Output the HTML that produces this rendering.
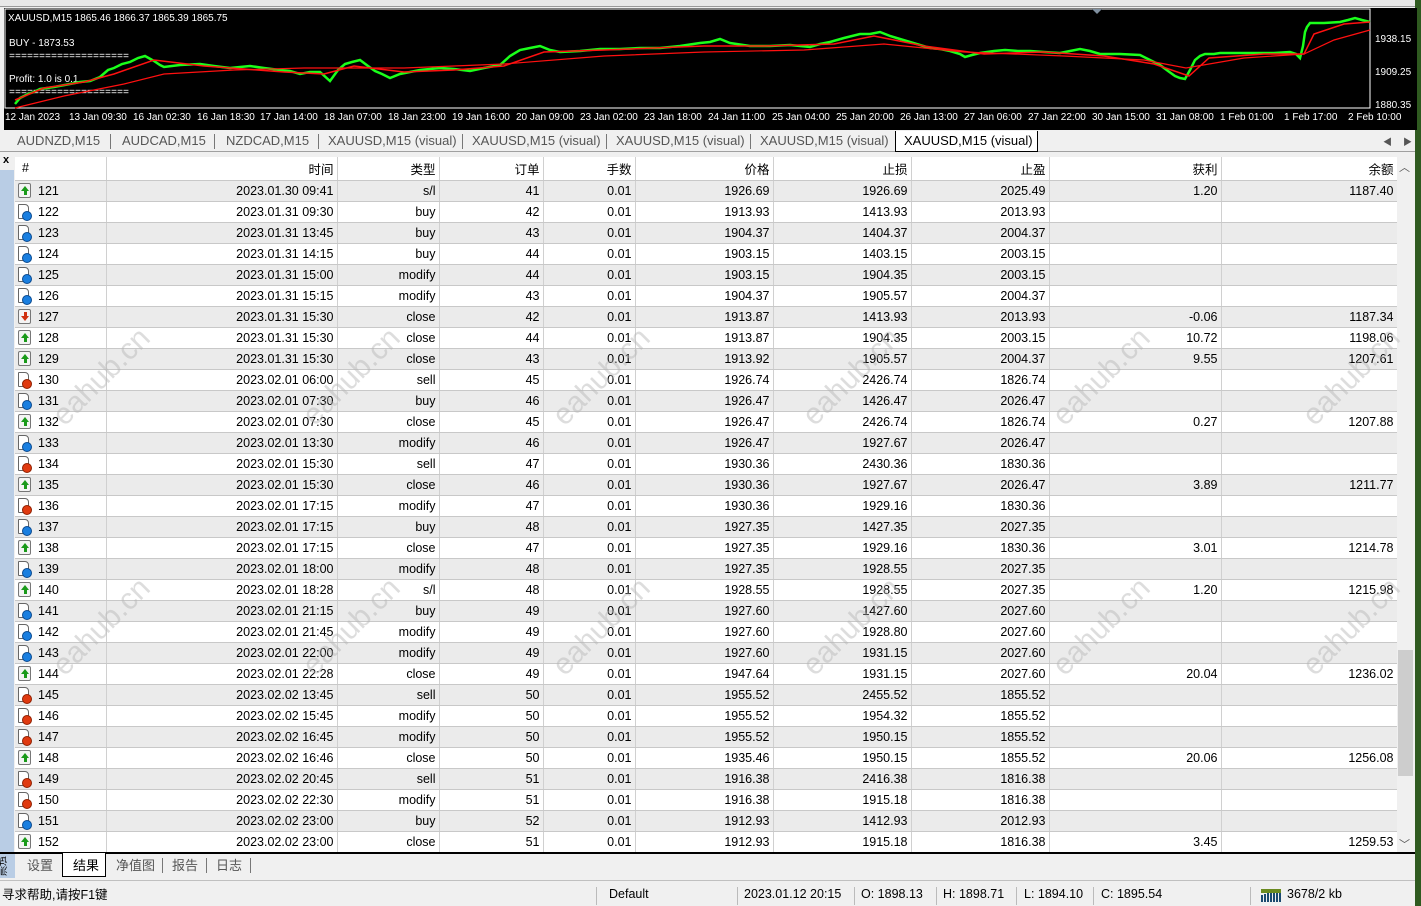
<!DOCTYPE html><html><head><meta charset="utf-8"><style>
*{margin:0;padding:0;box-sizing:border-box}
body{width:1421px;height:906px;background:#f0f0f0;font-family:"Liberation Sans","Noto Sans CJK SC",sans-serif;font-size:12.5px;color:#000;position:relative;overflow:hidden}
.abs{position:absolute}
#chart{left:4px;top:8px;width:1413px;height:122px;background:#000}
#tabs{left:0;top:131px;width:1415px;height:21px;background:#f0f0f0;border-bottom:1px solid #a0a0a0}
.tab{position:absolute;top:2px;color:#555;font-size:13px}
.sep{position:absolute;top:3px;width:1px;height:15px;background:#777}
#tbl{left:15px;top:157px;border-collapse:collapse;table-layout:fixed;background:#fff}
#tbl td{height:21px;border-right:1px solid #d0d0d0;border-bottom:1px solid #c8c8c8;text-align:right;padding:0 3px 0 0;white-space:nowrap;overflow:hidden;font-size:12.5px}
#tbl tr.h td{height:23px;border-bottom:1px solid #c8c8c8;background:#fff}
#tbl tr.g td{background:#ebebeb}
#tbl td.n{text-align:left;padding-left:3px}
.ic{display:inline-block;width:13px;height:15px;vertical-align:-3px;margin-right:7px;position:relative}
.up,.dn{border:1px solid #777;background:#f4f4f4;border-radius:2px}
.up:after{content:"";position:absolute;left:2px;top:2px;width:0;height:0;border-left:4px solid transparent;border-right:4px solid transparent;border-bottom:5px solid #1a9a1a}
.up:before{content:"";position:absolute;left:4.5px;top:6px;width:3px;height:5px;background:#1a9a1a}
.dn:after{content:"";position:absolute;left:2px;top:6px;border-left:4px solid transparent;border-right:4px solid transparent;border-top:5px solid #d03010}
.dn:before{content:"";position:absolute;left:4.5px;top:2px;width:3px;height:5px;background:#d03010}
.doc{border:1px solid #666;border-radius:1px 4px 1px 1px;background:#fff;width:11px;margin-right:9px}
.doc:after{content:"";position:absolute;right:-4px;bottom:-3px;width:8px;height:8px;border-radius:50%;background:#1a7fe0;border:1px solid #0a4a90}
.doc.r:after{background:#e03a10;border-color:#902000}
#left{left:0;top:170px;width:14px;height:682px;background:#b9cde5}
#vs{left:1397px;top:156px;width:18px;height:696px;background:#f0f0f0}
.wm{position:absolute;color:rgba(180,180,180,.45);font-size:30px;transform:rotate(-45deg);font-family:"Liberation Sans",sans-serif;white-space:nowrap}
</style></head><body>
<div class="abs" style="left:1415px;top:0;width:6px;height:906px;background:#2f5a20"></div>
<div class="abs" style="left:0;top:0;width:1415px;height:7px;background:#e8e8e8;border-bottom:1px solid #999"></div>
<div id="chart" class="abs">
<svg width="1413" height="122" style="position:absolute;left:0;top:0">
<rect x="1" y="1" width="1365" height="99" fill="none" stroke="#fff" stroke-width="1"/>
<polygon points="1088,1 1098,1 1093,6" fill="#8090a0"/>
<text x="4" y="13" fill="#fff" font-size="10" font-family="Liberation Sans">XAUUSD,M15  1865.46 1866.37 1865.39 1865.75</text>
<text x="5" y="38" fill="#fff" font-size="10" font-family="Liberation Sans">BUY - 1873.53</text>
<text x="5" y="51" fill="#fff" font-size="10" font-family="Liberation Mono">====================</text>
<text x="5" y="74" fill="#fff" font-size="10" font-family="Liberation Sans">Profit: 1.0 is 0.1</text>
<text x="5" y="87" fill="#fff" font-size="10" font-family="Liberation Mono">====================</text>
<polyline fill="none" stroke="#1aff1a" stroke-width="2.5" points="11,96 16,90 24,86 30,84 36,81 50,79 66,76 76,74 86,73 96,69 104,62 110,60 118,56 126,54 134,50 141,48 150,53 156,57 160,59 176,57 196,56 210,58 226,60 246,58 260,60 276,62 286,63 296,66 306,64 316,64 326,73 334,62 341,56 348,54 356,52 364,58 371,63 378,66 386,70 396,66 406,64 416,62 426,61 436,60 450,61 466,63 480,60 496,57 506,48 516,42 526,40 536,38 546,42 556,44 576,43 596,41 616,41 636,40 656,40 676,38 696,35 706,34 716,31 726,35 746,38 766,38 786,37 806,39 816,36 826,34 840,30 856,26 866,26 876,24 886,28 896,31 906,34 916,37 926,40 936,41 946,43 956,46 961,49 968,47 976,45 990,43 1001,42 1014,43 1026,43 1040,44 1056,45 1066,43 1076,41 1086,43 1096,46 1116,46 1136,47 1146,52 1156,57 1164,63 1171,68 1176,70 1181,71 1186,62 1191,52 1196,48 1201,46 1210,46 1216,45 1236,45 1256,45 1270,45 1286,44 1292,46 1296,50 1299,38 1301,24 1303,19 1306,15 1320,15 1336,14 1344,12 1351,10 1358,12 1366,14"/>
<polyline fill="none" stroke="#ff1010" stroke-width="1.5" points="11,92 40,80 80,74 110,66 150,52 200,58 280,64 320,66 350,58 400,64 450,62 500,58 540,44 600,42 700,38 760,38 830,36 870,28 920,38 980,46 1040,44 1100,48 1150,56 1185,68 1205,50 1260,46 1300,46 1310,26 1340,16 1366,14"/>
<polyline fill="none" stroke="#ff1010" stroke-width="1.2" points="11,100 60,88 120,76 160,66 230,62 300,60 400,60 500,56 600,48 700,44 800,42 880,36 960,44 1060,48 1140,52 1182,60 1240,50 1300,46 1330,32 1366,22"/>
<g fill="#fff" font-size="10" font-family="Liberation Sans">
<text x="1371" y="34">1938.15</text><text x="1371" y="67">1909.25</text><text x="1371" y="100">1880.35</text>
<text x="1" y="112">12 Jan 2023</text><text x="65" y="112">13 Jan 09:30</text><text x="129" y="112">16 Jan 02:30</text><text x="193" y="112">16 Jan 18:30</text><text x="256" y="112">17 Jan 14:00</text><text x="320" y="112">18 Jan 07:00</text><text x="384" y="112">18 Jan 23:00</text><text x="448" y="112">19 Jan 16:00</text><text x="512" y="112">20 Jan 09:00</text><text x="576" y="112">23 Jan 02:00</text><text x="640" y="112">23 Jan 18:00</text><text x="704" y="112">24 Jan 11:00</text><text x="768" y="112">25 Jan 04:00</text><text x="832" y="112">25 Jan 20:00</text><text x="896" y="112">26 Jan 13:00</text><text x="960" y="112">27 Jan 06:00</text><text x="1024" y="112">27 Jan 22:00</text><text x="1088" y="112">30 Jan 15:00</text><text x="1152" y="112">31 Jan 08:00</text><text x="1216" y="112">1 Feb 01:00</text><text x="1280" y="112">1 Feb 17:00</text><text x="1344" y="112">2 Feb 10:00</text>
</g>
</svg></div>
<div id="tabs" class="abs">
<span class="tab" style="left:17px">AUDNZD,M15</span><div class="sep" style="left:110px"></div>
<span class="tab" style="left:122px">AUDCAD,M15</span><div class="sep" style="left:214px"></div>
<span class="tab" style="left:226px">NZDCAD,M15</span><div class="sep" style="left:318px"></div>
<span class="tab" style="left:328px">XAUUSD,M15 (visual)</span><div class="sep" style="left:462px"></div>
<span class="tab" style="left:472px">XAUUSD,M15 (visual)</span><div class="sep" style="left:606px"></div>
<span class="tab" style="left:616px">XAUUSD,M15 (visual)</span><div class="sep" style="left:750px"></div>
<span class="tab" style="left:760px">XAUUSD,M15 (visual)</span>
<div class="abs" style="left:895px;top:0;width:143px;height:21px;background:#fff;border:1px solid #000;border-top:none"><span style="position:absolute;left:8px;top:2px;font-size:13px">XAUUSD,M15 (visual)</span></div>
<span class="tab" style="left:1383px;font-size:9px;top:4px">◀</span><span class="tab" style="left:1403px;font-size:9px;top:4px">▶</span>
</div>
<div class="abs" style="left:3px;top:154px;font-size:11px;font-weight:bold">x</div>
<div id="left" class="abs"></div>
<table id="tbl" class="abs">
<colgroup><col style="width:91px"><col style="width:231px"><col style="width:102px"><col style="width:104px"><col style="width:92px"><col style="width:138px"><col style="width:138px"><col style="width:138px"><col style="width:172px"><col style="width:176px"></colgroup>
<tr class="h"><td class="n" style="padding-left:7px">#</td><td>时间</td><td>类型</td><td>订单</td><td>手数</td><td>价格</td><td>止损</td><td>止盈</td><td>获利</td><td>余额</td></tr>
<tr class="g"><td class="n"><i class="ic up"></i>121</td><td>2023.01.30 09:41</td><td>s/l</td><td>41</td><td>0.01</td><td>1926.69</td><td>1926.69</td><td>2025.49</td><td>1.20</td><td>1187.40</td></tr>
<tr><td class="n"><i class="ic doc"></i>122</td><td>2023.01.31 09:30</td><td>buy</td><td>42</td><td>0.01</td><td>1913.93</td><td>1413.93</td><td>2013.93</td><td></td><td></td></tr>
<tr class="g"><td class="n"><i class="ic doc"></i>123</td><td>2023.01.31 13:45</td><td>buy</td><td>43</td><td>0.01</td><td>1904.37</td><td>1404.37</td><td>2004.37</td><td></td><td></td></tr>
<tr><td class="n"><i class="ic doc"></i>124</td><td>2023.01.31 14:15</td><td>buy</td><td>44</td><td>0.01</td><td>1903.15</td><td>1403.15</td><td>2003.15</td><td></td><td></td></tr>
<tr class="g"><td class="n"><i class="ic doc"></i>125</td><td>2023.01.31 15:00</td><td>modify</td><td>44</td><td>0.01</td><td>1903.15</td><td>1904.35</td><td>2003.15</td><td></td><td></td></tr>
<tr><td class="n"><i class="ic doc"></i>126</td><td>2023.01.31 15:15</td><td>modify</td><td>43</td><td>0.01</td><td>1904.37</td><td>1905.57</td><td>2004.37</td><td></td><td></td></tr>
<tr class="g"><td class="n"><i class="ic dn"></i>127</td><td>2023.01.31 15:30</td><td>close</td><td>42</td><td>0.01</td><td>1913.87</td><td>1413.93</td><td>2013.93</td><td>-0.06</td><td>1187.34</td></tr>
<tr><td class="n"><i class="ic up"></i>128</td><td>2023.01.31 15:30</td><td>close</td><td>44</td><td>0.01</td><td>1913.87</td><td>1904.35</td><td>2003.15</td><td>10.72</td><td>1198.06</td></tr>
<tr class="g"><td class="n"><i class="ic up"></i>129</td><td>2023.01.31 15:30</td><td>close</td><td>43</td><td>0.01</td><td>1913.92</td><td>1905.57</td><td>2004.37</td><td>9.55</td><td>1207.61</td></tr>
<tr><td class="n"><i class="ic doc r"></i>130</td><td>2023.02.01 06:00</td><td>sell</td><td>45</td><td>0.01</td><td>1926.74</td><td>2426.74</td><td>1826.74</td><td></td><td></td></tr>
<tr class="g"><td class="n"><i class="ic doc"></i>131</td><td>2023.02.01 07:30</td><td>buy</td><td>46</td><td>0.01</td><td>1926.47</td><td>1426.47</td><td>2026.47</td><td></td><td></td></tr>
<tr><td class="n"><i class="ic up"></i>132</td><td>2023.02.01 07:30</td><td>close</td><td>45</td><td>0.01</td><td>1926.47</td><td>2426.74</td><td>1826.74</td><td>0.27</td><td>1207.88</td></tr>
<tr class="g"><td class="n"><i class="ic doc"></i>133</td><td>2023.02.01 13:30</td><td>modify</td><td>46</td><td>0.01</td><td>1926.47</td><td>1927.67</td><td>2026.47</td><td></td><td></td></tr>
<tr><td class="n"><i class="ic doc r"></i>134</td><td>2023.02.01 15:30</td><td>sell</td><td>47</td><td>0.01</td><td>1930.36</td><td>2430.36</td><td>1830.36</td><td></td><td></td></tr>
<tr class="g"><td class="n"><i class="ic up"></i>135</td><td>2023.02.01 15:30</td><td>close</td><td>46</td><td>0.01</td><td>1930.36</td><td>1927.67</td><td>2026.47</td><td>3.89</td><td>1211.77</td></tr>
<tr><td class="n"><i class="ic doc r"></i>136</td><td>2023.02.01 17:15</td><td>modify</td><td>47</td><td>0.01</td><td>1930.36</td><td>1929.16</td><td>1830.36</td><td></td><td></td></tr>
<tr class="g"><td class="n"><i class="ic doc"></i>137</td><td>2023.02.01 17:15</td><td>buy</td><td>48</td><td>0.01</td><td>1927.35</td><td>1427.35</td><td>2027.35</td><td></td><td></td></tr>
<tr><td class="n"><i class="ic up"></i>138</td><td>2023.02.01 17:15</td><td>close</td><td>47</td><td>0.01</td><td>1927.35</td><td>1929.16</td><td>1830.36</td><td>3.01</td><td>1214.78</td></tr>
<tr class="g"><td class="n"><i class="ic doc"></i>139</td><td>2023.02.01 18:00</td><td>modify</td><td>48</td><td>0.01</td><td>1927.35</td><td>1928.55</td><td>2027.35</td><td></td><td></td></tr>
<tr><td class="n"><i class="ic up"></i>140</td><td>2023.02.01 18:28</td><td>s/l</td><td>48</td><td>0.01</td><td>1928.55</td><td>1928.55</td><td>2027.35</td><td>1.20</td><td>1215.98</td></tr>
<tr class="g"><td class="n"><i class="ic doc"></i>141</td><td>2023.02.01 21:15</td><td>buy</td><td>49</td><td>0.01</td><td>1927.60</td><td>1427.60</td><td>2027.60</td><td></td><td></td></tr>
<tr><td class="n"><i class="ic doc"></i>142</td><td>2023.02.01 21:45</td><td>modify</td><td>49</td><td>0.01</td><td>1927.60</td><td>1928.80</td><td>2027.60</td><td></td><td></td></tr>
<tr class="g"><td class="n"><i class="ic doc"></i>143</td><td>2023.02.01 22:00</td><td>modify</td><td>49</td><td>0.01</td><td>1927.60</td><td>1931.15</td><td>2027.60</td><td></td><td></td></tr>
<tr><td class="n"><i class="ic up"></i>144</td><td>2023.02.01 22:28</td><td>close</td><td>49</td><td>0.01</td><td>1947.64</td><td>1931.15</td><td>2027.60</td><td>20.04</td><td>1236.02</td></tr>
<tr class="g"><td class="n"><i class="ic doc r"></i>145</td><td>2023.02.02 13:45</td><td>sell</td><td>50</td><td>0.01</td><td>1955.52</td><td>2455.52</td><td>1855.52</td><td></td><td></td></tr>
<tr><td class="n"><i class="ic doc r"></i>146</td><td>2023.02.02 15:45</td><td>modify</td><td>50</td><td>0.01</td><td>1955.52</td><td>1954.32</td><td>1855.52</td><td></td><td></td></tr>
<tr class="g"><td class="n"><i class="ic doc r"></i>147</td><td>2023.02.02 16:45</td><td>modify</td><td>50</td><td>0.01</td><td>1955.52</td><td>1950.15</td><td>1855.52</td><td></td><td></td></tr>
<tr><td class="n"><i class="ic up"></i>148</td><td>2023.02.02 16:46</td><td>close</td><td>50</td><td>0.01</td><td>1935.46</td><td>1950.15</td><td>1855.52</td><td>20.06</td><td>1256.08</td></tr>
<tr class="g"><td class="n"><i class="ic doc r"></i>149</td><td>2023.02.02 20:45</td><td>sell</td><td>51</td><td>0.01</td><td>1916.38</td><td>2416.38</td><td>1816.38</td><td></td><td></td></tr>
<tr><td class="n"><i class="ic doc r"></i>150</td><td>2023.02.02 22:30</td><td>modify</td><td>51</td><td>0.01</td><td>1916.38</td><td>1915.18</td><td>1816.38</td><td></td><td></td></tr>
<tr class="g"><td class="n"><i class="ic doc"></i>151</td><td>2023.02.02 23:00</td><td>buy</td><td>52</td><td>0.01</td><td>1912.93</td><td>1412.93</td><td>2012.93</td><td></td><td></td></tr>
<tr><td class="n"><i class="ic up"></i>152</td><td>2023.02.02 23:00</td><td>close</td><td>51</td><td>0.01</td><td>1912.93</td><td>1915.18</td><td>1816.38</td><td>3.45</td><td>1259.53</td></tr>
</table>
<div id="vs" class="abs">
<div class="abs" style="left:2px;top:3px;font-size:11px;color:#555">︿</div>
<div class="abs" style="left:1px;top:494px;width:15px;height:126px;background:#cdcdcd"></div>
<div class="abs" style="left:2px;top:680px;font-size:11px;color:#555">﹀</div>
</div>
<div class="abs" style="left:0;top:852px;width:1415px;height:2px;background:#000"></div>
<div class="abs" style="left:0;top:854px;width:15px;height:24px;background:#b9cde5;font-size:10px;line-height:10px;writing-mode:vertical-rl;transform:rotate(180deg);text-align:center">测试</div>
<div class="abs" style="left:15px;top:854px;width:1400px;height:24px;background:#f0f0f0">
<span class="abs" style="left:12px;top:1px;color:#555;font-size:13px">设置</span>
<div class="abs" style="left:47px;top:-1px;width:44px;height:24px;background:#fff;border:1px solid #000;border-top:none"><span style="position:absolute;left:10px;top:2px;font-size:13px">结果</span></div>
<span class="abs" style="left:101px;top:1px;color:#555;font-size:13px">净值图</span><div class="sep" style="left:147px;top:4px"></div>
<span class="abs" style="left:157px;top:1px;color:#555;font-size:13px">报告</span><div class="sep" style="left:191px;top:4px"></div>
<span class="abs" style="left:201px;top:1px;color:#555;font-size:13px">日志</span><div class="sep" style="left:235px;top:4px"></div>
</div>
<div class="abs" style="left:0;top:880px;width:1415px;height:1px;background:#c0c0c0"></div>
<div class="abs" style="left:0;top:884px;width:1415px;height:22px;font-size:12.5px">
<span class="abs" style="left:2px;top:0px">寻求帮助,请按F1键</span>
<div class="sep" style="left:596px;top:3px;height:18px;background:#bbb"></div><span class="abs" style="left:609px;top:3px">Default</span>
<div class="sep" style="left:737px;top:3px;height:18px;background:#bbb"></div><span class="abs" style="left:744px;top:3px">2023.01.12 20:15</span>
<div class="sep" style="left:854px;top:3px;height:18px;background:#bbb"></div><span class="abs" style="left:861px;top:3px">O: 1898.13</span>
<div class="sep" style="left:936px;top:3px;height:18px;background:#bbb"></div><span class="abs" style="left:943px;top:3px">H: 1898.71</span>
<div class="sep" style="left:1016px;top:3px;height:18px;background:#bbb"></div><span class="abs" style="left:1024px;top:3px">L: 1894.10</span>
<div class="sep" style="left:1093px;top:3px;height:18px;background:#bbb"></div><span class="abs" style="left:1101px;top:3px">C: 1895.54</span>
<div class="sep" style="left:1250px;top:3px;height:18px;background:#bbb"></div>
<svg class="abs" style="left:1261px;top:5px" width="22" height="13"><g fill="#1a4a70"><rect x="0" y="6" width="2" height="7"/><rect x="3" y="5" width="2" height="8"/><rect x="6" y="4" width="2" height="9"/><rect x="9" y="3" width="2" height="10"/><rect x="12" y="2" width="2" height="11"/><rect x="15" y="1" width="2" height="12"/><rect x="18" y="0" width="2" height="13"/></g><g fill="#6a8a20"><rect x="0" y="0" width="20" height="4"/></g></svg>
<span class="abs" style="left:1287px;top:3px">3678/2 kb</span>
</div>
<div class="wm" style="left:40px;top:360px">eahub.cn</div>
<div class="wm" style="left:290px;top:360px">eahub.cn</div>
<div class="wm" style="left:540px;top:360px">eahub.cn</div>
<div class="wm" style="left:790px;top:360px">eahub.cn</div>
<div class="wm" style="left:1040px;top:360px">eahub.cn</div>
<div class="wm" style="left:1290px;top:360px">eahub.cn</div>
<div class="wm" style="left:40px;top:610px">eahub.cn</div>
<div class="wm" style="left:290px;top:610px">eahub.cn</div>
<div class="wm" style="left:540px;top:610px">eahub.cn</div>
<div class="wm" style="left:790px;top:610px">eahub.cn</div>
<div class="wm" style="left:1040px;top:610px">eahub.cn</div>
<div class="wm" style="left:1290px;top:610px">eahub.cn</div>
</body></html>
